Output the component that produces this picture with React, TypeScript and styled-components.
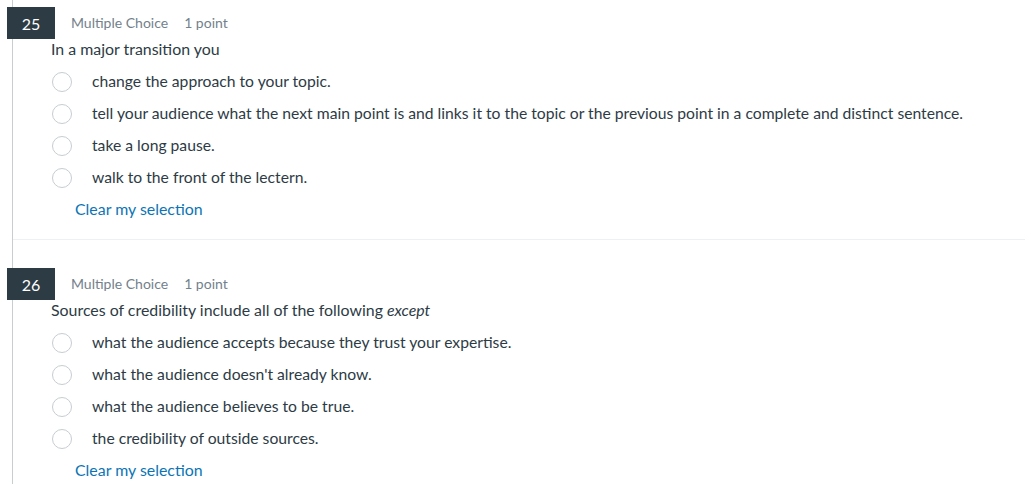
import React, { FC } from "react";
import styled, { createGlobalStyle } from "styled-components";

const GlobalStyle = createGlobalStyle`
  html, body {
    margin: 0;
    padding: 0;
    background: #ffffff;
    overflow: hidden;
  }
  body {
    font-family: Lato, "Liberation Sans", sans-serif;
    color: #2d3b45;
  }
`;

interface Question {
  number: number;
  type: string;
  points: string;
  prompt: React.ReactNode;
  answers: string[];
}

const questions: Question[] = [
  {
    number: 25,
    type: "Multiple Choice",
    points: "1 point",
    prompt: "In a major transition you",
    answers: [
      "change the approach to your topic.",
      "tell your audience what the next main point is and links it to the topic or the previous point in a complete and distinct sentence.",
      "take a long pause.",
      "walk to the front of the lectern.",
    ],
  },
  {
    number: 26,
    type: "Multiple Choice",
    points: "1 point",
    prompt: (
      <>
        Sources of credibility include all of the following <em>except</em>
      </>
    ),
    answers: [
      "what the audience accepts because they trust your expertise.",
      "what the audience doesn't already know.",
      "what the audience believes to be true.",
      "the credibility of outside sources.",
    ],
  },
];

// the list is scrolled a little, so the first block starts above the window
const Page = styled.div`
  margin-top: -21px;
  padding-left: 7px;
`;

const QuestionList = styled.div`
  border-left: 1px solid #c7cdd1;
  margin-left: 5px;
`;

const QuestionBlock = styled.section`
  padding: 28px 0 14px;
  border-bottom: 1px solid #eef0f1;
`;

const Header = styled.div`
  display: flex;
  align-items: center;
  height: 32px;
  margin-left: -6px;
`;

const NumberBox = styled.div`
  width: 48px;
  height: 32px;
  background: #2d3b45;
  color: #ffffff;
  font-size: 16px;
  display: flex;
  align-items: center;
  justify-content: center;
`;

const Meta = styled.span`
  font-size: 14px;
  color: #73818c;
  margin-left: 16px;
  margin-top: -1px;
`;

const Points = styled(Meta)``;

const Prompt = styled.div`
  font-size: 15.9px;
  line-height: 22px;
  margin: -1px 0 0 38px;
  em {
    font-style: italic;
  }
`;

const AnswerList = styled.div`
  display: flex;
  flex-direction: column;
  margin-top: 6px;
  padding-left: 39px;
`;

const AnswerRow = styled.label`
  display: flex;
  align-items: center;
  height: 32px;
  font-size: 15.7px;
  cursor: pointer;
`;

const Radio = styled.span`
  width: 18px;
  height: 18px;
  border-radius: 50%;
  border: 1px solid #c7cdd1;
  background: #ffffff;
  flex-shrink: 0;
`;

const AnswerText = styled.span`
  margin-left: 20px;
  margin-top: -3px;
`;

const ClearLink = styled.a`
  display: block;
  height: 32px;
  line-height: 32px;
  margin: -1px 0 0 62px;
  font-size: 15.9px;
  color: #0b74b5;
  text-decoration: none;
  cursor: pointer;
`;

const QuestionItem: FC<{ q: Question }> = ({ q }) => (
  <QuestionBlock>
    <Header>
      <NumberBox>{q.number}</NumberBox>
      <Meta>{q.type}</Meta>
      <Points>{q.points}</Points>
    </Header>
    <Prompt>{q.prompt}</Prompt>
    <AnswerList>
      {q.answers.map((a) => (
        <AnswerRow key={a}>
          <Radio />
          <AnswerText>{a}</AnswerText>
        </AnswerRow>
      ))}
    </AnswerList>
    <ClearLink>Clear my selection</ClearLink>
  </QuestionBlock>
);

const App: FC = () => (
  <>
    <GlobalStyle />
    <Page>
      <QuestionList>
        {questions.map((q) => (
          <QuestionItem key={q.number} q={q} />
        ))}
      </QuestionList>
    </Page>
  </>
);

export default App;
